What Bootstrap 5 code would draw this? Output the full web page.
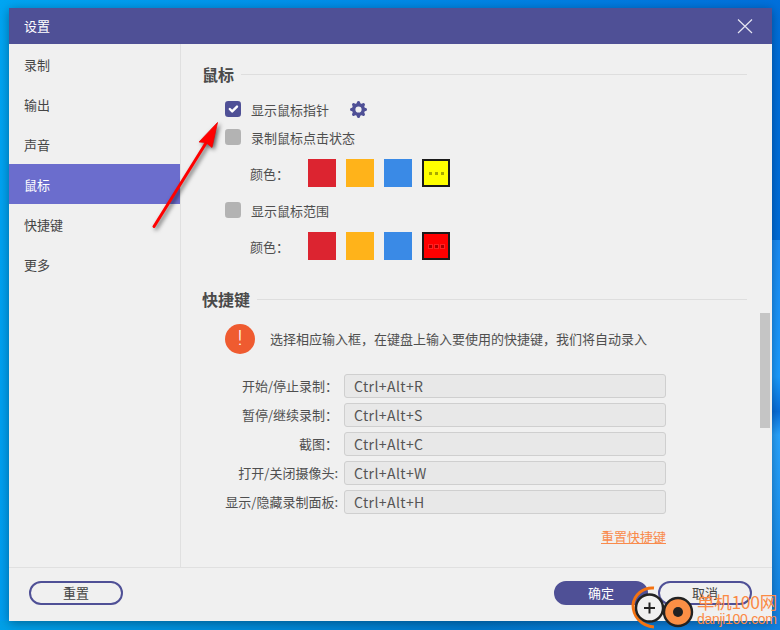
<!DOCTYPE html>
<html lang="zh-CN">
<head>
<meta charset="utf-8">
<title>设置</title>
<link href="https://cdn.jsdelivr.net/npm/bootstrap@5.3.0/dist/css/bootstrap.min.css" rel="stylesheet">
<style>
html,body{height:630px;overflow:hidden}
body{margin:0;padding:8px 8px 9px 9px;position:relative;background:linear-gradient(100deg,#00a5f2 0%,#0090ea 35%,#0068d8 100%);font-family:"Noto Sans CJK SC","Liberation Sans",sans-serif;font-size:13px;color:#4f4f4f}
.wallpaper-glow{position:absolute;right:0;top:240px;width:8px;height:390px;background:linear-gradient(180deg,#1a8cf5 0%,#1a9cff 35%,#0a6fdc 44%,#28a4ff 50%,#1080e0 100%)}
.wallpaper-low{position:absolute;left:0;right:0;bottom:0;height:9px;background:linear-gradient(90deg,#00a0e8,#0078cc 60%,#1080e0)}
.dlg{position:relative;height:613px;background:#f0f0f0;box-shadow:0 2px 10px rgba(0,0,0,.35)}
.dlg-head{height:36px;padding:0 20px 0 15px;background:#4f5096;color:#fff;flex:none}
.dlg-close{width:16px;height:16px;padding:0;border:0;background:none;line-height:0;position:relative;left:1px}
.dlg-mid{height:523px;flex:none}
.side{width:172px;border-right:1px solid #e0e0e0}
.side-item{height:40px;padding-left:15px;color:#454545;line-height:41px;flex:none}
.side-item.on{background:#6b6dcd;color:#fff;width:171px}
.pane{padding:20px 25px 0 21px;position:relative}
.sec-title{height:22px;font-size:16px;font-weight:700;color:#4a4a4a;line-height:20px;gap:7px}
.sec-title span{margin-top:-2px}
.sec-title hr{flex:1;margin:0 0 2px;border:0;border-top:1px solid #dedede;opacity:1}
.opts{padding-left:23px}
.chk{width:16px;height:16px;margin:0 10px 0 0;flex:none;border:0;border-radius:2px;background-color:#b3b3b3;float:none}
.chk:checked{background-color:#4f5096;border:0}
.opt-row{height:16px;line-height:16px}
.opt-row label{position:relative;top:1px}
.gear{margin-left:21px;position:relative}
.col-row{height:28px;padding-left:25px;margin-top:14px}
.col-lab{width:58px;flex:none;position:relative;top:1px}
.swatch{width:28px;height:28px;padding:0;margin-right:10px;border:0;border-radius:0;flex:none}
.sw-red{background:#dc2430}.sw-amb{background:#ffb31a}.sw-blu{background:#3a8ae6}
.sw-yel{background:#ff0;border:2px solid #1a1a1a;gap:3px}
.sw-rd2{background:#f00;border:2px solid #1a1a1a;gap:3px}
.sw-yel i,.sw-rd2 i{display:block;width:3px;height:3px;background:#a8a800}
.sw-rd2 i{background:#a80000;outline:1px solid #f22}
.tip-ic{width:30px;height:30px;flex:none;border-radius:50%;background:#ef5b30;color:#fff;font-size:20px;line-height:29px;text-align:center;font-family:Roboto,sans-serif;font-weight:300}
.tip-row{height:30px;padding-left:23px;margin-top:13px;gap:15px}
.key-list{margin-top:20px;gap:5px}
.key-row{height:24px}
.key-lab{width:136px;flex:none;text-align:right;white-space:nowrap;margin-right:6px}
.key-inp{width:322px;height:24px;padding:0 9px;border:1px solid #cfcfcf;border-radius:3px;background:#e8e8e8;color:#555;font-size:14px;font-family:"Noto Sans CJK SC",sans-serif;letter-spacing:.4px;min-height:0}
.key-inp:focus{background:#e8e8e8;color:#555;border-color:#cfcfcf;box-shadow:none}
.reset-wrap{width:464px;margin-top:14px;height:18px;line-height:18px}
.reset-lnk{color:#f98a4b}
.thumb{position:absolute;right:2px;top:269px;width:10px;height:115px;background:#c5c5c5}
.dlg-foot{border-top:1px solid #e0e0e0;padding:13px 20px 0}
.pill{width:94px;height:24px;padding:0;border:2px solid #4f5096;border-radius:12px;background:transparent;color:#444;font-size:13px;line-height:20px}
.pill.fill{background:#4f5096;color:#fff;margin-right:10px}
.arrow{position:absolute;left:145px;top:115px;filter:drop-shadow(2px 2px 2px rgba(0,0,0,.6))}
.wm{position:absolute;left:630px;top:584px;width:150px;height:46px}
.wm-t1{position:absolute;left:67px;top:7px;color:#fb8a45;font-size:17.5px;line-height:22px;font-family:"Noto Sans CJK SC",sans-serif;font-weight:400;white-space:nowrap;letter-spacing:-.3px}
.wm-t2{position:absolute;left:67px;top:27px;color:#fb8a45;font-size:14px;line-height:16px;font-family:"Liberation Sans",sans-serif;white-space:nowrap;letter-spacing:-.3px}
</style>
</head>
<body>
<div class="wallpaper-glow"></div>
<div class="wallpaper-low"></div>
<div class="dlg d-flex flex-column">
  <div class="dlg-head d-flex align-items-center justify-content-between">
    <span>设置</span>
    <button class="dlg-close" type="button" aria-label="关闭"><svg width="16" height="16" viewBox="0 0 16 16"><path d="M1 1.5L15 15M15 1.5L1 15" stroke="#e6e6f2" stroke-width="1.2" fill="none"/></svg></button>
  </div>
  <div class="dlg-mid d-flex">
    <div class="side d-flex flex-column">
      <div class="side-item">录制</div>
      <div class="side-item">输出</div>
      <div class="side-item">声音</div>
      <div class="side-item on">鼠标</div>
      <div class="side-item">快捷键</div>
      <div class="side-item">更多</div>
    </div>
    <div class="pane flex-grow-1">
      <div class="sec-title d-flex align-items-center"><span>鼠标</span><hr></div>
      <div class="opts">
        <div class="opt-row d-flex align-items-center" style="margin-top:15px">
          <input class="form-check-input chk" type="checkbox" checked id="c1"><label for="c1">显示鼠标指针</label>
          <svg class="gear" width="17" height="17" viewBox="0 0 16 16" fill="#4f5096"><path d="M9.405 1.05c-.413-1.4-2.397-1.4-2.81 0l-.1.34a1.464 1.464 0 0 1-2.105.872l-.31-.17c-1.283-.698-2.686.705-1.987 1.987l.169.311c.446.82.023 1.841-.872 2.105l-.34.1c-1.4.413-1.4 2.397 0 2.81l.34.1a1.464 1.464 0 0 1 .872 2.105l-.17.31c-.698 1.283.705 2.686 1.987 1.987l.311-.169a1.464 1.464 0 0 1 2.105.872l.1.34c.413 1.4 2.397 1.4 2.81 0l.1-.34a1.464 1.464 0 0 1 2.105-.872l.31.17c1.283.698 2.686-.705 1.987-1.987l-.169-.311a1.464 1.464 0 0 1 .872-2.105l.34-.1c1.4-.413 1.4-2.397 0-2.81l-.34-.1a1.464 1.464 0 0 1-.872-2.105l.17-.31c.698-1.283-.705-2.686-1.987-1.987l-.311.169a1.464 1.464 0 0 1-2.105-.872l-.1-.34zM8 10.93a2.929 2.929 0 1 1 0-5.86 2.929 2.929 0 0 1 0 5.858z"/></svg>
        </div>
        <div class="opt-row d-flex align-items-center" style="margin-top:12px">
          <input class="form-check-input chk" type="checkbox" id="c2"><label for="c2">录制鼠标点击状态</label>
        </div>
        <div class="col-row d-flex align-items-center">
          <span class="col-lab">颜色：</span>
          <button class="btn swatch sw-red" type="button" aria-label="红"></button>
          <button class="btn swatch sw-amb" type="button" aria-label="橙"></button>
          <button class="btn swatch sw-blu" type="button" aria-label="蓝"></button>
          <button class="btn swatch sw-yel d-flex align-items-center justify-content-center" type="button" aria-label="自定义"><i></i><i></i><i></i></button>
        </div>
        <div class="opt-row d-flex align-items-center" style="margin-top:15px">
          <input class="form-check-input chk" type="checkbox" id="c3"><label for="c3">显示鼠标范围</label>
        </div>
        <div class="col-row d-flex align-items-center">
          <span class="col-lab">颜色：</span>
          <button class="btn swatch sw-red" type="button" aria-label="红"></button>
          <button class="btn swatch sw-amb" type="button" aria-label="橙"></button>
          <button class="btn swatch sw-blu" type="button" aria-label="蓝"></button>
          <button class="btn swatch sw-rd2 d-flex align-items-center justify-content-center" type="button" aria-label="自定义"><i></i><i></i><i></i></button>
        </div>
      </div>
      <div class="sec-title d-flex align-items-center" style="margin-top:29px"><span>快捷键</span><hr></div>
      <div class="tip-row d-flex align-items-center">
        <span class="tip-ic">!</span><span>选择相应输入框，在键盘上输入要使用的快捷键，我们将自动录入</span>
      </div>
      <div class="key-list d-flex flex-column">
        <div class="key-row d-flex align-items-center"><span class="key-lab">开始/停止录制：</span><input class="form-control key-inp" value="Ctrl+Alt+R" readonly></div>
        <div class="key-row d-flex align-items-center"><span class="key-lab">暂停/继续录制：</span><input class="form-control key-inp" value="Ctrl+Alt+S" readonly></div>
        <div class="key-row d-flex align-items-center"><span class="key-lab">截图：</span><input class="form-control key-inp" value="Ctrl+Alt+C" readonly></div>
        <div class="key-row d-flex align-items-center"><span class="key-lab">打开/关闭摄像头:</span><input class="form-control key-inp" value="Ctrl+Alt+W" readonly></div>
        <div class="key-row d-flex align-items-center"><span class="key-lab">显示/隐藏录制面板:</span><input class="form-control key-inp" value="Ctrl+Alt+H" readonly></div>
      </div>
      <div class="reset-wrap text-end"><a class="reset-lnk" href="#">重置快捷键</a></div>
      <div class="thumb"></div>
    </div>
  </div>
  <div class="dlg-foot d-flex justify-content-between flex-grow-1">
    <button class="btn pill" type="button">重置</button>
    <div class="d-flex align-items-start">
      <button class="btn pill fill" type="button">确定</button>
      <button class="btn pill" type="button">取消</button>
    </div>
  </div>
</div>
<svg class="arrow" width="90" height="125" viewBox="145 115 90 125" aria-hidden="true">
  <path d="M154 226.5L206 143" stroke="#f00" stroke-width="3" stroke-linecap="round" fill="none"/>
  <path d="M217.5 122.5L199 142L206 142.5L212 147.5Z" fill="#f00" stroke="#e00" stroke-width=".8" stroke-linejoin="round"/>
</svg>
<div class="wm">
  <svg width="64" height="46" viewBox="0 0 64 46" style="position:absolute;left:0;top:0" aria-hidden="true">
    <path d="M24 4C13 3 4 11 3 21C3 32 11 42 24 43" stroke="#f5720f" stroke-width="3" fill="none"/>
    <circle cx="19.500" cy="24" r="13.5" fill="#f0f0f0" stroke="#222" stroke-width="2.4"/>
    <path d="M14 24H25M19.500 18.500V29.500" stroke="#222" stroke-width="2"/>
    <circle cx="48" cy="28" r="14" fill="#fb8f45" stroke="#222" stroke-width="2.4"/>
    <circle cx="48" cy="28" r="5" fill="#222"/>
  </svg>
  <span class="wm-t1">单机100网</span>
  <span class="wm-t2">danji100.com</span>
</div>
<script src="https://cdn.jsdelivr.net/npm/bootstrap@5.3.0/dist/js/bootstrap.bundle.min.js"></script>
</body>
</html>
